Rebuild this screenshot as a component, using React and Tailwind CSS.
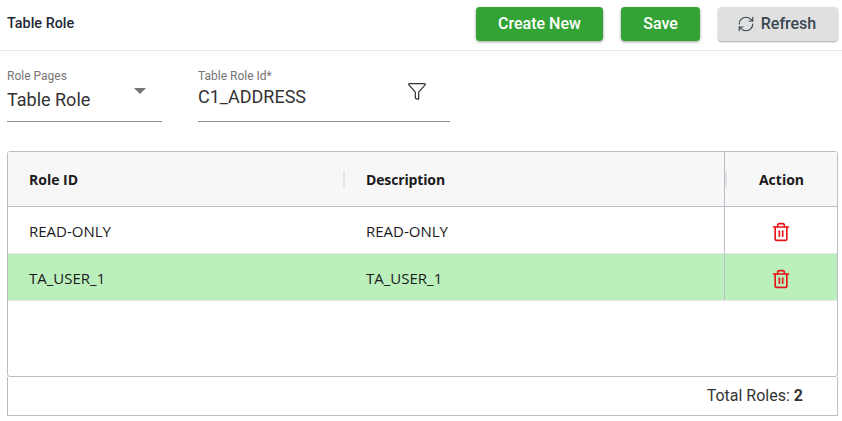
import React from 'react';
import { Funnel, RefreshCw, Trash2 } from 'lucide-react';

const ROLES = [
    { id: 'READ-ONLY', description: 'READ-ONLY' },
    { id: 'TA_USER_1', description: 'TA_USER_1', selected: true },
];

function Header() {
    return (
        <div className="flex h-[51px] items-center justify-between border-b border-[#e8e8e8] pl-[7px] pr-1">
            <h1 className="pb-[2px] text-[14.4px] font-medium text-[#1f2937]">Table Role</h1>
            <div className="flex items-center pb-[3px]">
                <button className="h-[34px] w-[127px] rounded bg-[#34a336] text-[16px] font-medium text-white shadow-[0_1px_3px_rgba(0,0,0,0.4)]">
                    Create New
                </button>
                <button className="ml-[18px] h-[34px] w-[79px] rounded bg-[#34a336] text-[16px] font-medium text-white shadow-[0_1px_3px_rgba(0,0,0,0.4)]">
                    Save
                </button>
                <button className="ml-[18px] flex h-[34px] w-[120px] items-center justify-center gap-[6px] rounded bg-[#e0e0e0] pr-[3px] text-[16px] font-medium text-[#37474f] shadow-[0_1px_2px_rgba(0,0,0,0.35)]">
                    <RefreshCw size={18} strokeWidth={1.5} />
                    Refresh
                </button>
            </div>
        </div>
    );
}

function Filters() {
    return (
        <div className="flex h-[71px] items-start gap-[36px] pl-[7px] pt-[18px]">
            <div className="relative h-[53px] w-[155px] border-b border-[#8c8c8c]">
                <div className="text-[12px] leading-[14px] text-[#757575]">Role Pages</div>
                <div className="mt-[3px] text-[18px] leading-[28px] text-[#333333]">Table Role</div>
                <span className="absolute right-[16px] top-[19px] h-0 w-0 border-x-[6px] border-t-[6px] border-x-transparent border-t-[#757575]" />
            </div>
            <div className="relative h-[53px] w-[252px] border-b border-[#8c8c8c]">
                <div className="text-[12px] leading-[14px] text-[#757575]">Table Role Id*</div>
                <div className="text-[18px] leading-[28px] text-[#333333]">C1_ADDRESS</div>
                <Funnel size={20} strokeWidth={1.5} className="absolute left-[209px] top-[12px] text-[#333333]" />
            </div>
        </div>
    );
}

function RolesTable() {
    return (
        <div className="ml-[7px] mr-[4px] mt-[29px] font-['Open_Sans',sans-serif] text-[15px] text-[#1a1a1a]">
            <div className="h-[226px] rounded-[3px] border border-[#bdbdc7]">
                <div className="flex h-[55px] items-center border-b border-[#bdbdc7] bg-[#f7f7f8] text-[14px] font-bold">
                    <div className="flex h-[16px] w-[337px] items-center border-r-2 border-[#e0e3e8] pl-[21px]">Role ID</div>
                    <div className="flex h-[16px] w-[379px] items-center pl-[21px] tracking-[-0.01em]">Description</div>
                    <div className="relative flex h-full flex-1 items-center justify-center border-l border-[#bdbdc7] pl-[1px]">
                        Action
                        <span className="absolute left-0 top-[19px] h-[16px] w-[2px] bg-[#e0e3e8]" />
                    </div>
                </div>
                {ROLES.map((role) => (
                    <div
                        key={role.id}
                        className={`flex h-[47px] items-center border-b border-[#e4e4e8] ${role.selected ? 'bg-[#bbf0bd]' : 'bg-white'}`}
                    >
                        <div className="w-[337px] pl-[21px] pt-[2px]">{role.id}</div>
                        <div className="w-[379px] pl-[21px] pt-[2px]">{role.description}</div>
                        <div className="flex h-full flex-1 items-center justify-center border-l border-[#bdbdc7] pr-[1px] pt-[3px]">
                            <Trash2 size={20} strokeWidth={2} className="text-[#e8151b]" />
                        </div>
                    </div>
                ))}
            </div>
            <div className="flex h-[39px] items-center justify-end border-x border-b border-[#bdbdc7] pr-[34px] font-['Roboto',sans-serif] text-[16px] text-[#333333]">
                Total Roles:&nbsp;<span className="font-bold">2</span>
            </div>
        </div>
    );
}

export default function App() {
    return (
        <div className="h-[421px] w-[842px] overflow-hidden bg-white font-['Roboto',sans-serif]">
            <Header />
            <Filters />
            <RolesTable />
        </div>
    );
}
